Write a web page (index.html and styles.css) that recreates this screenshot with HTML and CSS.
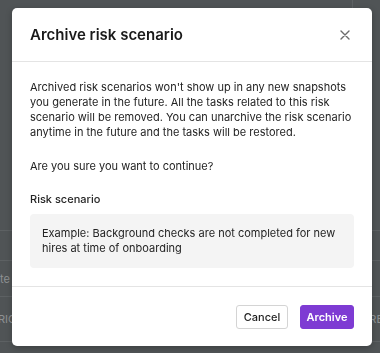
FILE: index.html
```html
<!DOCTYPE html>
<html>
<head>
<meta charset="utf-8">
<link rel="stylesheet" href="styles.css">
</head>
<body>
<div class="page">
  <div class="page-top"><div class="col-a"></div><div class="col-b"></div></div>
  <div class="row r1"></div>
  <div class="row r2"><span class="cell-right">te</span></div>
  <div class="row r3"><span class="cell-left">RIO</span><span class="cell-right">RE</span></div>
  <div class="row r4"></div>
</div>
<div class="overlay">
  <div class="modal">
    <div class="modal-header">
      <h2 class="modal-title">Archive risk scenario</h2>
      <button class="close" aria-label="Close">
        <svg width="10" height="10" viewBox="0 0 10 10"><path d="M1 1L9 9M9 1L1 9" stroke="#6b6b6b" stroke-width="1.4" stroke-linecap="round"/></svg>
      </button>
    </div>
    <div class="modal-body">
      <p class="text">Archived risk scenarios won't show up in any new snapshots you generate in the future. All the tasks related to this risk scenario will be removed. You can unarchive the risk scenario anytime in the future and the tasks will be restored.</p>
      <p class="text">Are you sure you want to continue?</p>
      <div class="label">Risk scenario</div>
      <div class="scenario">Example: Background checks are not completed for new hires at time of onboarding</div>
    </div>
    <div class="modal-footer">
      <button class="btn btn-secondary">Cancel</button>
      <button class="btn btn-primary">Archive</button>
    </div>
  </div>
</div>
</body>
</html>
```

FILE: styles.css
```css
* { box-sizing: border-box; }
html, body { margin: 0; padding: 0; }
body {
  width: 380px;
  height: 353px;
  overflow: hidden;
  background: #505456;
  font-family: Inter, "Noto Sans", sans-serif;
}
.page { height: 353px; }
.page-top { height: 230px; display: flex; }
.col-a { width: 352px; }
.col-b { width: 1px; height: 8px; background: #5d6163; }
.row {
  border-top: 1px solid #5d6163;
  display: flex;
  align-items: center;
  justify-content: space-between;
  font-size: 11px;
  color: #8e9193;
}
.r1 { height: 30px; }
.r2 { height: 36px; }
.r3 { height: 45px; }
.r4 { height: 12px; }
.cell-left { margin-left: -2px; }
.cell-right { margin-right: -3px; }

.overlay {
  position: fixed;
  inset: 0;
}
.modal {
  position: absolute;
  left: 12px;
  top: 8px;
  width: 360px;
  height: 338px;
  background: #fff;
  border-radius: 5px;
  box-shadow: 0 2px 6px rgba(0,0,0,0.25);
  display: flex;
  flex-direction: column;
}
.modal-header {
  height: 54px;
  flex: none;
  display: flex;
  align-items: center;
  justify-content: space-between;
  padding: 0 22px 0 18px;
  border-bottom: 1px solid #e4e4e4;
}
.modal-title {
  margin: 0;
  font-size: 15px;
  font-weight: 600;
  color: #1a1a1a;
}
.close {
  border: 0;
  background: none;
  padding: 0;
  width: 10px;
  height: 10px;
  display: flex;
  margin-top: 1px;
}
.modal-body {
  flex: 1;
  padding: 18px 18px 18px;
  color: #242424;
  font-size: 11px;
  line-height: 15px;
}
.text { margin: 0 0 19px; }
.label {
  font-weight: 500;
  margin-top: -1px;
  margin-bottom: 7px;
}
.scenario {
  background: #f4f4f4;
  border-radius: 4px;
  padding: 12px 12px;
  height: 54px;
}
.modal-footer {
  height: 61px;
  flex: none;
  border-top: 1px solid #e4e4e4;
  display: flex;
  align-items: center;
  justify-content: flex-end;
  gap: 12px;
  padding: 0 18px;
}
.btn {
  font-family: Inter, "Noto Sans", sans-serif;
  font-size: 11px;
  font-weight: 500;
  height: 24px;
  border-radius: 3px;
  padding: 0;
  cursor: pointer;
}
.btn-secondary {
  width: 52px;
  background: #fff;
  border: 1px solid #d4d4d4;
  color: #1f1f1f;
}
.btn-primary {
  width: 54px;
  background: #7e3bd3;
  border: 1px solid #7e3bd3;
  color: #fff;
  font-weight: 600;
}
```
